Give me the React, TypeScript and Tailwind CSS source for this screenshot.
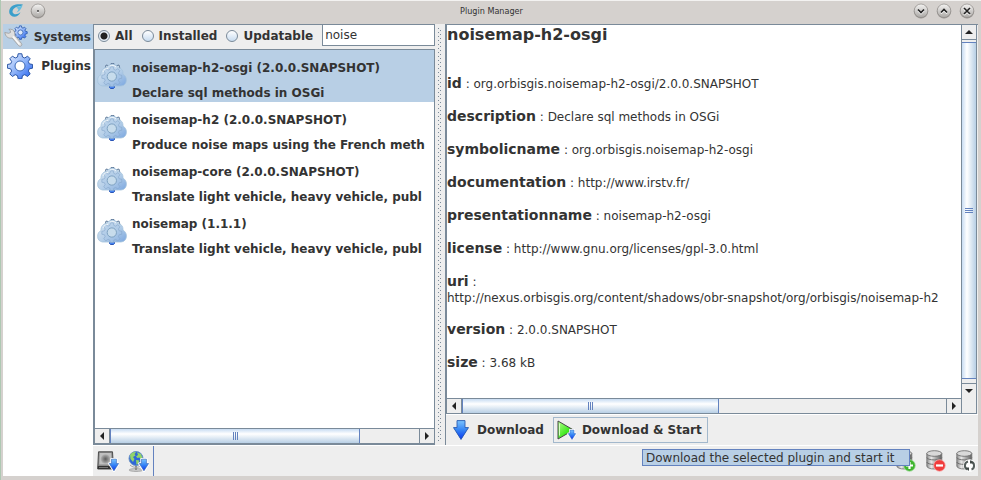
import React, { useState } from "react";

const GEAR =
  "M10.3 0.7h3.4l.6 3 2.1.9 2.6-1.7 2.4 2.4-1.7 2.6.9 2.1 3 .6v3.4l-3 .6-.9 2.1 1.7 2.6-2.4 2.4-2.6-1.7-2.1.9-.6 3h-3.4l-.6-3-2.1-.9-2.6 1.7-2.4-2.4 1.7-2.6-.9-2.1-3-.6v-3.4l3-.6.9-2.1-1.7-2.6 2.4-2.4 2.6 1.7 2.1-.9z";

function Gradients() {
  return (
    <svg width="0" height="0" className="absolute" aria-hidden="true">
      <defs>
        <linearGradient id="gear" x1="0" y1="0" x2="1" y2="1">
          <stop offset="0" stopColor="#e4edff" />
          <stop offset="0.5" stopColor="#8fb4f8" />
          <stop offset="1" stopColor="#1c5cf0" />
        </linearGradient>
        <linearGradient id="cloud" x1="0" y1="0" x2="1" y2="1">
          <stop offset="0" stopColor="#dbe8f2" />
          <stop offset="0.55" stopColor="#b4cee8" />
          <stop offset="1" stopColor="#7aa6e0" />
        </linearGradient>
        <linearGradient id="arrow" x1="0" y1="0" x2="0" y2="1">
          <stop offset="0" stopColor="#7cc4ff" />
          <stop offset="0.5" stopColor="#3584f4" />
          <stop offset="1" stopColor="#0a36f0" />
        </linearGradient>
        <linearGradient id="play" x1="0" y1="0" x2="1" y2="1">
          <stop offset="0" stopColor="#b4ff8c" />
          <stop offset="0.6" stopColor="#3ce81c" />
          <stop offset="1" stopColor="#28c80c" />
        </linearGradient>
        <linearGradient id="can" x1="0" y1="0" x2="1" y2="0">
          <stop offset="0" stopColor="#8c8c8c" />
          <stop offset="0.3" stopColor="#e8e8e8" />
          <stop offset="0.6" stopColor="#a8a8a8" />
          <stop offset="1" stopColor="#606060" />
        </linearGradient>
        <linearGradient id="knob" x1="0" y1="0" x2="0" y2="1">
          <stop offset="0" stopColor="#f4f3f2" />
          <stop offset="1" stopColor="#aaa7a4" />
        </linearGradient>
        <radialGradient id="lens">
          <stop offset="0" stopColor="#5c5c5c" />
          <stop offset="0.6" stopColor="#8f8f8f" />
          <stop offset="1" stopColor="#b4b4b4" />
        </radialGradient>
      </defs>
    </svg>
  );
}

function GearIcon() {
  return (
    <svg width="26" height="26" viewBox="0 0 24 24" aria-hidden="true">
      <path d={GEAR} fill="url(#gear)" stroke="#2853a4" strokeWidth="0.9" />
      <circle cx="12" cy="12" r="4.6" fill="#fff" stroke="#3866b4" strokeWidth="0.9" />
    </svg>
  );
}

function ToolsIcon() {
  return (
    <svg width="24" height="24" viewBox="0 0 24 24" aria-hidden="true">
      <g transform="translate(9.500 0.500) scale(.58)">
        <path d={GEAR} fill="url(#gear)" stroke="#2f5cae" strokeWidth="1.5" />
        <circle cx="12" cy="12" r="4.4" fill="#dce8f8" stroke="#3866b4" strokeWidth="1.4" />
      </g>
      <path
        d="M.8 7.500l3.800.8 1.900-.8-.2-1.900-1.500-1.300c2.600-.7 5.600.800 6 3.700.1.900 0 1.600-.1 2.200l6.800 8.300c1.100 1.900-.9 3.600-2.700 2.300L8 13c-3 .9-6.600-1.100-7.200-5.500z"
        fill="#dedede"
        stroke="#9a9a9a"
        strokeWidth="0.8"
      />
      <path d="M9 11.500l6.500 8" stroke="#fafafa" strokeWidth="1.3" />
    </svg>
  );
}

function CloudGearIcon() {
  return (
    <svg width="30" height="26" viewBox="0 0 30 26" className="shrink-0 self-center" aria-hidden="true">
      <path d="M12.500 20h5v4.500l-1 1h-3l-1-1z" fill="#3b7df5" stroke="#2a55b5" />
      <path d="M8 6l1-4 4 1 1-2.500h3l1 2.500 4-1 1 4z" fill="#d5e3ee" stroke="#4a678c" strokeWidth="0.8" />
      <path
        d="M5.500 23C2.500 22.500.6 20.500.6 17.500c0-3 1.200-4.900 3.400-5.800C3.800 7.500 6 4.800 9.500 4.500c1.500-2.200 3.500-3.300 6-3.200 3 .1 4.600 1.500 5.500 3.400 3.400.2 5.300 2.800 5 6.500 2.300 1.300 3.500 3.300 3.400 6-.1 3.200-2.100 5.600-5.400 5.800z"
        fill="url(#cloud)"
        stroke="#a5c3dc"
        strokeWidth="0.8"
      />
      <g transform="translate(4.500 3.200) scale(.86)">
        <path d={GEAR} fill="#a3c2e4" fillOpacity=".35" stroke="#84a5ca" strokeOpacity=".75" strokeWidth="0.9" />
        <circle cx="12" cy="12" r="5.400" fill="#c7dcec" stroke="#7b9fbe" strokeWidth="1.1" />
      </g>
      <path d="M6 9c1-3 3-3.500 5-3.500M13 3c2-1 4-1 6 1" stroke="#f0f6fa" fill="none" />
    </svg>
  );
}

function DownArrow({ x, y, s }: { x: number; y: number; s: number }) {
  return (
    <g transform={`translate(${x} ${y}) scale(${s})`}>
      <path
        d="M4 .6h8v7h3.500L8 19.400.5 7.600H4z"
        fill="url(#arrow)"
        stroke="#fff"
        strokeWidth={s < 1 ? 4 : 0}
        strokeLinejoin="round"
      />
      <path d="M4 .6h8v7h3.500L8 19.400.5 7.600H4z" fill="url(#arrow)" stroke="#2c5cb0" strokeWidth="0.9" />
    </g>
  );
}

function DownloadIcon() {
  return (
    <svg width="16" height="20" viewBox="0 0 16 20" aria-hidden="true">
      <DownArrow x={0} y={0} s={1} />
    </svg>
  );
}

function PlayIcon() {
  return (
    <svg width="20" height="20" viewBox="0 0 20 20" aria-hidden="true">
      <path d="M1 1l15.500 9L1 19z" fill="url(#play)" stroke="#484848" />
      <path d="M2.500 3.500v12" stroke="#d6ffc4" />
      <DownArrow x={11} y={9.800} s={0.5} />
    </svg>
  );
}

function DriveIcon() {
  return (
    <svg width="22" height="21" viewBox="0 0 22 21" aria-hidden="true">
      <path d="M1.500.8h14L16.500 18H.7z" fill="#8a8a8a" stroke="#4c4c4c" />
      <path d="M2.700 2h11.600l.4 11.500H2.200z" fill="#c0c0c0" />
      <circle cx="8.500" cy="8" r="4.800" fill="url(#lens)" />
      <path d="M.8 15h15v3H.8z" fill="#333" />
      <path d="M2 16.500h9" stroke="#777" />
      <DownArrow x={12} y={7.800} s={0.62} />
    </svg>
  );
}

function GlobeIcon() {
  return (
    <svg width="22" height="21" viewBox="0 0 22 21" aria-hidden="true">
      <ellipse cx="9" cy="19" rx="7" ry="1.5" fill="#c8c8c8" stroke="#999" strokeWidth=".7" />
      <path d="M9 14v5" stroke="#8c8c8c" strokeWidth="2" />
      <path d="M3 14c3.500 3.500 10 3 13-1" fill="none" stroke="#a4a4a4" />
      <circle cx="9" cy="7.5" r="7" fill="#2e66d8" stroke="#6a91c5" />
      <path
        d="M3 4c1.500-2.500 4-3.300 6-2.800L7.500 3l1 1.500L6 6l1.500 2L6 11 3.500 8zM10 1.300l4 1.700 1.500 4-2 1.500-1-2-2 .5L9 5.500l2-1.500zM9 9l3.500.5L11 13l-1.500.800z"
        fill="#92d36a"
      />
      <DownArrow x={12} y={7.800} s={0.62} />
    </svg>
  );
}

function DatabaseIcon({ kind }: { kind: "add" | "remove" | "sync" }) {
  return (
    <svg width="20" height="22" viewBox="0 0 20 22" aria-hidden="true">
      <path d="M.8 3.500v12.500c0 4 15 4 15 0V3.500z" fill="url(#can)" stroke="#707070" strokeWidth="0.8" />
      <path d="M.8 7.500c0 3.200 15 3.200 15 0M.8 12c0 3.200 15 3.200 15 0" fill="none" stroke="#696969" strokeWidth="0.9" />
      <ellipse cx="8.3" cy="3.5" rx="7.5" ry="2.8" fill="#d9d9d9" stroke="#656565" strokeWidth="0.8" />
      {kind === "remove" && (
        <>
          <circle cx="13.5" cy="15.5" r="5.8" fill="#f03c3c" stroke="#f7b0b0" strokeWidth=".8" />
          <path d="M10 15.500h7" stroke="#fff" strokeWidth="2.2" />
        </>
      )}
      {kind === "add" && (
        <>
          <circle cx="13.5" cy="15.5" r="5.8" fill="#3fb52e" stroke="#a5dda0" strokeWidth=".8" />
          <path d="M10 15.500h7M13.500 12v7" stroke="#fff" strokeWidth="2.2" />
        </>
      )}
      {kind === "sync" && (
        <>
          <circle cx="13.5" cy="15.5" r="6.3" fill="#fff" />
          <path d="M12 11.500c-4 1-4 7-.5 8M15 11.500c4 1 4 7 .5 8" fill="none" stroke="#555e5c" strokeWidth="2" />
          <path d="M9 17.500h4v3.500zM18 13.500h-4v-3.500z" fill="#3f4745" />
        </>
      )}
    </svg>
  );
}

function WindowKnob({ label, mark }: { label: string; mark: string }) {
  return (
    <button aria-label={label} className="size-4">
      <svg width="16" height="16" viewBox="0 0 16 16" aria-hidden="true">
        <circle cx="8" cy="8.5" r="7.2" fill="#aaa6a3" />
        <circle cx="8" cy="7.8" r="6.8" fill="url(#knob)" stroke="#85817e" strokeWidth=".6" />
        <path d={mark} fill="none" stroke="#fff" strokeWidth="1.6" transform="translate(0 1)" />
        <path d={mark} fill="none" stroke="#222" strokeWidth="1.6" />
      </svg>
    </button>
  );
}

const TRIANGLES = {
  left: "M7 1v8L3 5z",
  right: "M3 1v8l4-4z",
  up: "M1 7h8L5 3z",
  down: "M1 3h8L5 7z",
};

function ArrowButton({ dir }: { dir: keyof typeof TRIANGLES }) {
  return (
    <button
      aria-label={`Scroll ${dir}`}
      className="flex size-[14px] shrink-0 items-center justify-center bg-[#eeeeee]"
    >
      <svg width="10" height="10" viewBox="0 0 10 10" aria-hidden="true">
        <path d={TRIANGLES[dir]} fill="#222" />
      </svg>
    </button>
  );
}

function HorizontalScroll({ size }: { size: string }) {
  return (
    <div className="flex h-4 min-w-0 flex-1 border-y border-[#7a8a99] bg-[#eeeeee]">
      <ArrowButton dir="left" />
      <div className="min-w-0 flex-1 border-x border-[#7a8a99]">
        <div
          className={`flex h-[14px] items-center justify-center gap-px border-x border-[#6382bf] bg-linear-to-b from-[#c8dcf2] via-white via-35% to-[#b8cfe5] ${size}`}
        >
          <span className="h-2 w-px bg-[#6382bf]" />
          <span className="h-2 w-px bg-[#6382bf]" />
          <span className="h-2 w-px bg-[#6382bf]" />
        </div>
      </div>
      <ArrowButton dir="right" />
    </div>
  );
}

function VerticalScroll() {
  return (
    <div className="flex w-4 shrink-0 flex-col border-x border-[#7a8a99] bg-[#eeeeee]">
      <ArrowButton dir="up" />
      <div className="flex min-h-0 flex-1 flex-col border-y border-[#7a8a99] pt-[2px] pb-1">
        <div className="flex flex-1 flex-col items-center justify-center gap-px border-y border-[#6382bf] bg-linear-to-r from-[#c8dcf2] via-white via-35% to-[#b8cfe5]">
          <span className="h-px w-2 bg-[#6382bf]" />
          <span className="h-px w-2 bg-[#6382bf]" />
          <span className="h-px w-2 bg-[#6382bf]" />
        </div>
      </div>
      <ArrowButton dir="down" />
    </div>
  );
}

const filters = ["All", "Installed", "Updatable"];

const plugins = [
  { name: "noisemap-h2-osgi (2.0.0.SNAPSHOT)", text: "Declare sql methods in OSGi" },
  { name: "noisemap-h2 (2.0.0.SNAPSHOT)", text: "Produce noise maps using the French meth" },
  { name: "noisemap-core (2.0.0.SNAPSHOT)", text: "Translate light vehicle, heavy vehicle, publ" },
  { name: "noisemap (1.1.1)", text: "Translate light vehicle, heavy vehicle, publ" },
];

const details = [
  ["id", "org.orbisgis.noisemap-h2-osgi/2.0.0.SNAPSHOT"],
  ["description", "Declare sql methods in OSGi"],
  ["symbolicname", "org.orbisgis.noisemap-h2-osgi"],
  ["documentation", "http://www.irstv.fr/"],
  ["presentationname", "noisemap-h2-osgi"],
  ["license", "http://www.gnu.org/licenses/gpl-3.0.html"],
  ["uri", "http://nexus.orbisgis.org/content/shadows/obr-snapshot/org/orbisgis/noisemap-h2"],
  ["version", "2.0.0.SNAPSHOT"],
  ["size", "3.68 kB"],
];

export default function App() {
  const [filter, setFilter] = useState("All");
  const [query, setQuery] = useState("noise");
  const [selected, setSelected] = useState(0);

  return (
    <div className="flex h-screen flex-col overflow-hidden border-l border-[#afc8b3] bg-[#d5d1ce] font-['DejaVu_Sans',sans-serif] text-xs text-[#333333]">
      <Gradients />
      <header className="flex h-6 shrink-0 items-center justify-between border-t border-[#f3f2f1] pr-[6px] pb-[3px] pl-[7px]">
        <div className="flex w-20 items-center gap-[6px]">
          <svg width="16" height="16" viewBox="0 0 16 16" aria-hidden="true">
            <path
              d="M5 2.500C.5 5 .2 10.500 3 12.500c3 2.500 8 1 9.500-3.500C10 11.500 6.500 12 5 10 3.600 8 5.500 5 9 3.800c3-1 5-.3 6-2.300-4-.500-7-.500-10 1z"
              fill="#3a9fcb"
            />
            <path d="M8 5c2-1.500 5-1.500 6.500-2.500C13.500 5 12 8.500 8.500 9.500 11 7 11 5.500 8 5z" fill="#66bfe0" />
          </svg>
          <WindowKnob label="Keep on all desktops" mark="M7.200 8h1.600" />
        </div>
        <h1 className="font-['DejaVu_Sans_Condensed','DejaVu_Sans',sans-serif] text-[9px] leading-3">Plugin Manager</h1>
        <div className="flex w-20 justify-end gap-[7px]">
          <WindowKnob label="Minimize" mark="M5 6.500l3 3 3-3" />
          <WindowKnob label="Maximize" mark="M5 9.500l3-3 3 3" />
          <WindowKnob label="Close" mark="M5 5l6 6M11 5l-6 6" />
        </div>
      </header>

      <div className="mr-[3px] mb-1 ml-[2px] flex min-h-0 flex-1 bg-[#eeeeee]">
        <nav className="flex w-[90px] shrink-0 flex-col bg-white font-bold">
          <button className="flex h-[25px] items-center justify-between bg-[#b8cfe5] pr-[2px] pl-[1px]">
            <ToolsIcon />
            Systems
          </button>
          <button className="flex h-[34px] items-center justify-between pr-[2px] pl-1">
            <GearIcon />
            Plugins
          </button>
        </nav>

        <div className="flex min-w-0 flex-1 flex-col">
          <div className="flex min-h-0 flex-1 border-b border-white">
            <section className="flex w-[342px] shrink-0 flex-col border-t border-l border-[#7a8a99]">
              <div className="flex h-6 items-start gap-[9px] pl-1 font-bold">
                {filters.map((name) => (
                  <label key={name} className="flex h-[21px] shrink-0 items-center gap-[5px]">
                    <input
                      type="radio"
                      name="filter"
                      checked={filter === name}
                      onChange={() => setFilter(name)}
                      className="size-3 appearance-none rounded-full border border-[#7a8a99] bg-linear-to-b from-white to-[#c8dcf0] checked:bg-[radial-gradient(#222_0_3px,#e8f0f8_4px)]"
                    />
                    {name}
                  </label>
                ))}
                <input
                  aria-label="Search plugins"
                  value={query}
                  onChange={(e) => setQuery(e.target.value)}
                  className="ml-auto h-[21px] w-[113px] min-w-0 border border-t-0 border-[#7a8a99] bg-white px-[2px] font-normal outline-none"
                />
              </div>
              <div className="flex min-h-0 flex-1 flex-col border border-[#7a8a99] bg-white">
                <ul className="min-h-0 flex-1 overflow-hidden font-bold">
                  {plugins.map((plugin, i) => (
                    <li key={plugin.name}>
                      <button
                        onClick={() => setSelected(i)}
                        className={`flex h-[52px] w-full items-start gap-[5px] overflow-hidden pl-[2px] text-left whitespace-nowrap ${selected === i ? "bg-[#b8cfe5]" : ""}`}
                      >
                        <CloudGearIcon />
                        <span className="flex flex-col gap-[9px] pt-[10px] leading-4">
                          <span>{plugin.name}</span>
                          <span>{plugin.text}</span>
                        </span>
                      </button>
                    </li>
                  ))}
                </ul>
                <div className="flex">
                  <HorizontalScroll size="w-[81%]" />
                </div>
              </div>
            </section>

            <div className="w-[10px] shrink-0 cursor-col-resize px-[3px] py-1">
              <div className="h-full bg-[conic-gradient(from_270deg_at_1px_1px,#7a8a99_90deg,transparent_0),conic-gradient(from_270deg_at_1px_1px,#7a8a99_90deg,transparent_0)] bg-size-[4px_4px] bg-position-[0_0,2px_2px]" />
            </div>

            <section className="flex min-w-0 flex-1 flex-col border-t border-l border-[#7a8a99]">
              <div className="mr-px flex min-h-0 flex-1 flex-col border-l border-[#7a8a99]">
                <div className="flex min-h-0 flex-1">
                  <article className="min-w-0 flex-1 overflow-hidden bg-white whitespace-nowrap">
                    <h2 className="text-base leading-5 font-bold">noisemap-h2-osgi</h2>
                    <dl className="mt-[29px] flex flex-col gap-[14px]">
                      {details.map(([key, value]) => (
                        <div key={key} className="leading-[18px]">
                          <dt className="inline text-sm leading-[18px] font-bold">{key}</dt>
                          <span> : </span>
                          <dd className={key === "uri" ? "block leading-[15px]" : "inline"}>{value}</dd>
                        </div>
                      ))}
                    </dl>
                  </article>
                  <VerticalScroll />
                </div>
                <div className="flex">
                  <HorizontalScroll size="w-[53%]" />
                  <div className="w-4 shrink-0 border-x border-b border-[#7a8a99]" />
                </div>
              </div>
              <div className="flex h-[31px] shrink-0 items-center gap-[9px] border-t border-white pl-[7px] font-bold">
                <button className="flex items-center gap-2">
                  <DownloadIcon />
                  Download
                </button>
                <button className="flex h-[26px] w-[155px] items-center gap-[5px] border border-[#a3b8cc] px-[3px]">
                  <PlayIcon />
                  Download &amp; Start
                </button>
              </div>
            </section>
          </div>

          <footer className="relative flex h-[30px] shrink-0 items-center justify-between">
            <div className="flex h-full items-center gap-2 border-r border-[#6382bf] pr-1 pl-1">
              <button aria-label="Add plugin from file">
                <DriveIcon />
              </button>
              <button aria-label="Add plugin from URL">
                <GlobeIcon />
              </button>
            </div>
            <div className="flex items-center gap-[10px] pr-[2px]">
              <button aria-label="Add repository">
                <DatabaseIcon kind="add" />
              </button>
              <button aria-label="Remove repository">
                <DatabaseIcon kind="remove" />
              </button>
              <button aria-label="Refresh repositories">
                <DatabaseIcon kind="sync" />
              </button>
            </div>
            <div
              role="tooltip"
              className="absolute top-[3px] right-[68px] flex h-[17px] w-[268px] items-center border border-[#6382bf] bg-[#b8cfe5] px-[3px] whitespace-nowrap"
            >
              Download the selected plugin and start it
            </div>
          </footer>
        </div>
      </div>
    </div>
  );
}
